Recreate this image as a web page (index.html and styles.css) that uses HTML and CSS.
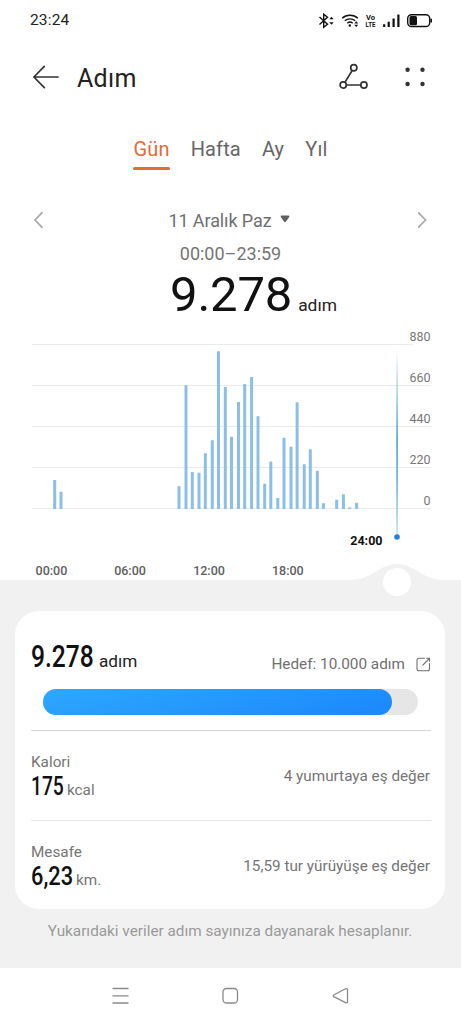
FILE: index.html
```html
<!DOCTYPE html>
<html lang="tr">
<head>
    <meta charset="UTF-8">
    <meta name="viewport" content="width=device-width, initial-scale=1.0">
    <title>Adım</title>
    <link rel="stylesheet" href="styles.css">
</head>
<body>
    <div class="statusbar">
        <span>23:24</span>
        <svg width="116" height="18" viewBox="317 11 116 18" fill="none" stroke="#111" stroke-width="1.4">
            <path d="M319.5 17l8 7.2-3.8 3V14.2l3.8 3-8 7.2"/>
            <path d="M329.3 19.2l2.2-2.4 2.2 2.4zM329.3 22.3l2.2 2.4 2.2-2.4z" fill="#111" stroke="none"/>
            <path d="M342.2 18.3c4-4 11.6-4 15.6 0M344.8 20.8c2.7-2.6 7.7-2.6 10.4 0M347.3 23.2c1.5-1.4 3.9-1.4 5.4 0"/>
            <circle cx="349.8" cy="25.5" r="1.2" fill="#111" stroke="none"/>
            <path d="M354.2 23.5l2-2.2 2 2.2zM354.2 24.8l2 2.2 2-2.2z" fill="#111" stroke="none"/>
            <g class="volte">
                <text x="366" y="19.8" textLength="9" lengthAdjust="spacingAndGlyphs">Vo</text>
                <text x="365.5" y="27" textLength="10" lengthAdjust="spacingAndGlyphs">LTE</text>
            </g>
            <path d="M384.2 24.2V27M388.7 21.8V27M393.6 18.5V27M398.4 14.5V27" stroke-width="2.2"/>
            <rect x="407.7" y="14.7" width="22" height="11.8" rx="3.8"/>
            <rect x="409.5" y="16" width="7.5" height="9.2" rx="1.5" fill="#111" stroke="none"/>
            <path d="M431.2 18.8v3.6" stroke-width="1.6"/>
        </svg>
    </div>

    <div class="header">
        <svg width="26" height="24" viewBox="0 0 26 24" fill="none" stroke="#333" stroke-width="1.7" stroke-linecap="round" stroke-linejoin="round">
            <path d="M25 12H1M11.3 1.300L.9 12l10.400 10.700"/>
        </svg>
        <h1>Adım</h1>
        <svg class="route" width="30" height="28" viewBox="0 0 30 28" fill="none" stroke="#333" stroke-width="1.7">
            <circle cx="14.8" cy="4.8" r="3.1"/>
            <circle cx="4.2" cy="22" r="3.1"/>
            <circle cx="24.9" cy="22" r="3.1"/>
            <path d="M13.2 7.5L5.9 19.4M7.3 22h14.5"/>
        </svg>
        <svg width="20" height="20" viewBox="0 0 20 20" fill="#333">
            <circle cx="2.600" cy="2.800" r="2.200"/>
            <circle cx="17.500" cy="2.800" r="2.200"/>
            <circle cx="2.600" cy="17" r="2.200"/>
            <circle cx="17.500" cy="17" r="2.200"/>
        </svg>
    </div>

    <div class="tabs">
        <a class="active">Gün</a>
        <a>Hafta</a>
        <a>Ay</a>
        <a>Yıl</a>
    </div>

    <div class="date">
        <svg width="10" height="18" viewBox="0 0 10 18" fill="none" stroke="#aaa" stroke-width="1.7"><path d="M9.500 1.200L2 9l7.500 7.800"/></svg>
        <div class="date-label">
            11 Aralık Paz
            <svg width="10" height="8" viewBox="0 0 10 8" fill="#606060"><path d="M1.500.5h7q1.500.2.7 1.600L5.800 6.800q-.8.9-1.600 0L.8 2.100Q0 .7 1.500.5z"/></svg>
        </div>
        <svg width="10" height="18" viewBox="0 0 10 18" fill="none" stroke="#aaa" stroke-width="1.7"><path d="M0 1.200L7.500 9 0 16.800"/></svg>
    </div>
    <div class="range">00:00–23:59</div>
    <div class="total"><strong>9.278</strong><span>adım</span></div>

    <svg class="chart" width="461" height="286" viewBox="0 325 461 286">
        <defs>
            <linearGradient id="cursor" x1="0" y1="0" x2="0" y2="1">
                <stop offset="0" stop-color="#4c9ed0" stop-opacity="0"/>
                <stop offset="0.5" stop-color="#4c9ed0"/>
                <stop offset="0.7" stop-color="#69b0d6"/>
                <stop offset="1" stop-color="#bfe2ee"/>
            </linearGradient>
        </defs>
        <path class="grid" d="M32 344.5H413M32 385.5H431M32 426.5H431M32 467.5H431M32 508.5H431"/>
        <path class="bars" d="M54.7 509V480M61 509V491.7M179 509V486.3M186 509V385.3M192.3 509V472M199 509V472.7M205.3 509V453.3M212.3 509V440.3M218.5 509V351.3M225.3 509V387M231.5 509V436.7M238.5 509V402M244.7 509V384M251.6 509V377M258 509V416.3M264.7 509V483.7M270.8 509V461.5M277.8 509V498M284 509V437.7M291 509V446.7M297.1 509V402.3M304.2 509V464.3M310.3 509V449.3M317.3 509V470.7M323.4 509V503.3M336.7 509V499.7M343.4 509V494.3M349.8 509V507.5M356.6 509V502.7"/>
        <rect x="396.3" y="348" width="1.6" height="187" fill="url(#cursor)"/>
        <circle cx="397" cy="537" r="2.8" fill="#2582dc"/>
        <g class="scale">
            <text x="430.5" y="341">880</text>
            <text x="430.5" y="382">660</text>
            <text x="430.5" y="423">440</text>
            <text x="430.5" y="464.400">220</text>
            <text x="430.5" y="505.400">0</text>
        </g>
        <g class="hours">
            <text x="51.4" y="574.500">00:00</text>
            <text x="130" y="574.500">06:00</text>
            <text x="209" y="574.500">12:00</text>
            <text x="287.8" y="574.500">18:00</text>
            <text class="now" x="366.4" y="545">24:00</text>
        </g>
        <path d="M0 580H349C362 580 371 575 379 569.5C391 562 403 562 415 569.5C423 575 432 580 445 580H461V611H0z" fill="#f1f1f1"/>
        <circle cx="397" cy="582" r="14" fill="#fff"/>
    </svg>

    <div class="summary">
        <div class="card">
            <div class="goal">
                <div class="value"><strong class="steps">9.278</strong><span>adım</span></div>
                <div class="target">
                    Hedef: 10.000 adım
                    <svg width="15" height="15" viewBox="0 0 15 15" fill="none" stroke="#707070" stroke-width="1.1" stroke-linecap="round">
                        <path d="M8.5 1.300H3Q1 1.300 1 3.300v8.500Q1 13.800 3 13.800h8.500Q13.500 13.800 13.500 11.800V6.500M6.800 8.200L13.300 1.500M10.500 1.300h3v3"/>
                    </svg>
                </div>
            </div>
            <div class="progress"><div class="progress-fill" style="width: 93%"></div></div>
            <div class="row">
                <div class="metric">
                    <div class="label">Kalori</div>
                    <div class="value small"><strong class="kcal">175</strong><span>kcal</span></div>
                </div>
                <div class="equal">4 yumurtaya eş değer</div>
            </div>
            <div class="row">
                <div class="metric">
                    <div class="label">Mesafe</div>
                    <div class="value small"><strong class="km">6,23</strong><span>km.</span></div>
                </div>
                <div class="equal">15,59 tur yürüyüşe eş değer</div>
            </div>
        </div>
        <p class="note">Yukarıdaki veriler adım sayınıza dayanarak hesaplanır.</p>
    </div>

    <div class="navbar">
        <svg width="18" height="18" viewBox="0 0 18 18"><path d="M.5 1.5h16M.5 8.800h16M.5 16h16"/></svg>
        <svg width="18" height="18" viewBox="0 0 18 18"><rect x="1" y="1.5" width="14.5" height="14.5" rx="3.5"/></svg>
        <svg width="18" height="18" viewBox="0 0 18 18"><path d="M13.500 1.800L1.800 8Q.5 8.800 1.800 9.600L13.500 15.700Q15.500 16.500 15.500 14.500V3Q15.500 1 13.500 1.800z"/></svg>
    </div>
</body>
</html>
```

FILE: styles.css
```css
* {
    box-sizing: border-box;
}
body {
    width: 461px;
    height: 1024px;
    margin: 0;
    overflow: hidden;
    background-color: #fff;
    font-family: Roboto, sans-serif;
    color: #222;
}
svg {
    display: block;
    flex: none;
}
.statusbar {
    display: flex;
    align-items: center;
    justify-content: space-between;
    height: 40px;
    padding: 0 28px 0 30px;
    font-size: 15.5px;
    letter-spacing: 0.15px;
}
.volte {
    font-size: 8px;
    font-weight: bold;
    letter-spacing: 0;
    fill: #111;
    stroke: none;
}
.header {
    display: flex;
    align-items: center;
    height: 74px;
    padding: 0 36px 0 33px;
}
h1 {
    flex: 1;
    margin: 2px 0 0 18px;
    font-size: 25px;
    font-weight: normal;
    letter-spacing: 0.3px;
}
.route {
    margin-right: 36px;
}
.tabs {
    display: flex;
    justify-content: center;
    gap: 21px;
    height: 92px;
    padding-top: 21px;
    font-size: 20px;
    line-height: 28px;
    letter-spacing: 0.15px;
    color: #666;
}
.tabs a {
    height: 36px;
}
.tabs .active {
    color: #e26c35;
}
.tabs .active::after {
    content: "";
    display: block;
    height: 3px;
    margin-top: 4px;
    border-radius: 2px;
    background-color: #e26c35;
}
.date {
    display: flex;
    align-items: center;
    justify-content: space-between;
    height: 28px;
    padding: 0 33px;
    font-size: 18px;
    color: #707070;
}
.date-label {
    display: flex;
    align-items: center;
    gap: 8px;
    margin-right: 3px;
    letter-spacing: -0.1px;
}
.date-label svg {
    margin-bottom: 2px;
}
.range {
    height: 36px;
    line-height: 40px;
    font-size: 18px;
    text-align: center;
    color: #757575;
}
.total {
    display: flex;
    align-items: baseline;
    justify-content: center;
    gap: 6px;
    height: 55px;
    padding-left: 46px;
    line-height: 50px;
    font-size: 17.4px;
}
.total strong {
    font-size: 49px;
    font-weight: normal;
    letter-spacing: -0.2px;
    color: #111;
}
.grid {
    stroke: #ebebeb;
    stroke-width: 1;
}
.bars {
    stroke: #8bbfe8;
    stroke-width: 3;
}
.scale {
    font-size: 12.5px;
    text-anchor: end;
    fill: #777;
}
.hours {
    font-size: 12.5px;
    font-weight: 500;
    text-anchor: middle;
    fill: #606060;
}
.hours .now {
    font-weight: bold;
    fill: #111;
}
.summary {
    height: 357px;
    padding: 0 16px 0 15px;
    background-color: #f1f1f1;
}
.card {
    height: 298px;
    padding: 0 14px 0 16px;
    border-radius: 24px;
    background-color: #fff;
}
.goal {
    display: flex;
    align-items: flex-end;
    justify-content: space-between;
    height: 78px;
    padding-bottom: 10px;
}
.value {
    display: flex;
    align-items: baseline;
    gap: 6px;
    font-size: 17.2px;
    line-height: 36px;
}
.value strong {
    font-size: 32px;
    font-weight: 500;
    color: #111;
    transform-origin: left;
}
/* condensed digits */
.steps {
    width: 62px;
    transform: scaleX(0.77);
}
.kcal {
    width: 33px;
    transform: scaleX(0.74);
}
.km {
    width: 42px;
    transform: scaleX(0.84);
}
.target {
    display: flex;
    align-items: center;
    gap: 11px;
    margin-bottom: 4px;
    font-size: 15.3px;
    line-height: 22px;
    color: #707070;
}
.progress {
    width: 375px;
    height: 26px;
    margin: 0 0 15px 12px;
    border-radius: 13px;
    background-color: #e6e6e6;
}
.progress-fill {
    height: 26px;
    border-radius: 13px;
    background: linear-gradient(165deg, #2ea8fd, #1b87fc);
}
.row {
    display: flex;
    align-items: center;
    justify-content: space-between;
    height: 90px;
    border-top: 1px solid #d8d8d8;
    font-size: 15.3px;
    color: #757575;
}
.row + .row {
    border-top-color: #e6e6e6;
}
.metric {
    padding-top: 5px;
}
.label {
    line-height: 20px;
}
.small {
    gap: 3px;
    font-size: 15.3px;
    line-height: 28px;
}
.small strong {
    font-size: 26px;
}
.equal {
    margin-right: 1px;
}
.note {
    margin: 0;
    padding-top: 12px;
    font-size: 15.3px;
    line-height: 20px;
    text-align: center;
    color: #999;
}
.navbar {
    display: flex;
    justify-content: center;
    gap: 92px;
    padding-top: 19px;
}
.navbar svg {
    fill: none;
    stroke: #8a8a8a;
    stroke-width: 1.3;
}
```
